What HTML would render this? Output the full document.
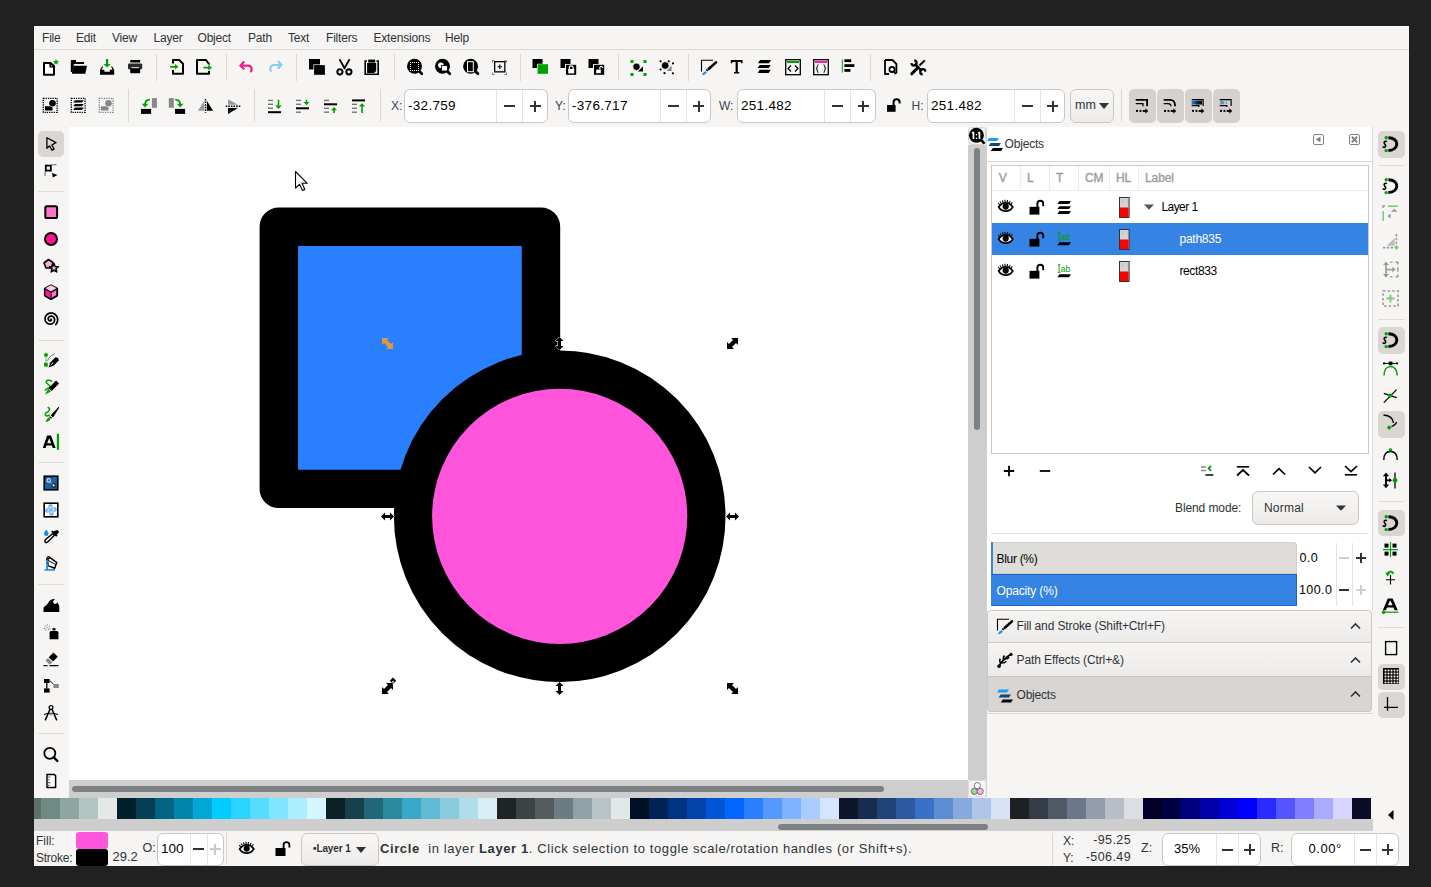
<!DOCTYPE html><html><head><meta charset="utf-8"><style>
*{box-sizing:border-box;margin:0;padding:0}
html,body{width:1431px;height:887px;overflow:hidden;background:#212121;font-family:"Liberation Sans",sans-serif;color:#2e3436}
.a{position:absolute}
.t{position:absolute;white-space:nowrap;line-height:1}
.sep{position:absolute;width:1px;background:#dad6d2}
.hsep{position:absolute;height:1px;background:#dad6d2}
svg{position:absolute;overflow:visible}
.spin{position:absolute;background:#fff;border:1px solid #cdc7c2;border-radius:6px}
.spin .s{position:absolute;top:0;bottom:0;width:1px;background:#e6e2de}
</style></head><body><div class="a" style="left:34px;top:26px;width:1375px;height:840px;background:#f6f5f4"></div>
<div class="a" style="left:34px;top:26px;width:1375px;height:1px;background:#fbfbfa"></div>
<div class="a" style="left:34px;top:49px;width:1375px;height:1px;background:#dcd8d4"></div>
<div class="t" style="left:42px;top:31.54px;font-size:12px;color:#2e3436;letter-spacing:-0.2px">File</div>
<div class="t" style="left:76px;top:31.54px;font-size:12px;color:#2e3436;letter-spacing:-0.2px">Edit</div>
<div class="t" style="left:112px;top:31.54px;font-size:12px;color:#2e3436;letter-spacing:-0.2px">View</div>
<div class="t" style="left:153.5px;top:31.54px;font-size:12px;color:#2e3436;letter-spacing:-0.2px">Layer</div>
<div class="t" style="left:197.5px;top:31.54px;font-size:12px;color:#2e3436;letter-spacing:-0.2px">Object</div>
<div class="t" style="left:248px;top:31.54px;font-size:12px;color:#2e3436;letter-spacing:-0.2px">Path</div>
<div class="t" style="left:288px;top:31.54px;font-size:12px;color:#2e3436;letter-spacing:-0.2px">Text</div>
<div class="t" style="left:326px;top:31.54px;font-size:12px;color:#2e3436;letter-spacing:-0.2px">Filters</div>
<div class="t" style="left:373.5px;top:31.54px;font-size:12px;color:#2e3436;letter-spacing:-0.2px">Extensions</div>
<div class="t" style="left:445px;top:31.54px;font-size:12px;color:#2e3436;letter-spacing:-0.2px">Help</div>
<div class="sep" style="left:156px;top:54px;height:27px"></div>
<div class="sep" style="left:226px;top:54px;height:27px"></div>
<div class="sep" style="left:296px;top:54px;height:27px"></div>
<div class="sep" style="left:394px;top:54px;height:27px"></div>
<div class="sep" style="left:520px;top:54px;height:27px"></div>
<div class="sep" style="left:618px;top:54px;height:27px"></div>
<div class="sep" style="left:688px;top:54px;height:27px"></div>
<div class="sep" style="left:870px;top:54px;height:27px"></div>
<div class="sep" style="left:128px;top:89px;height:33px"></div>
<div class="sep" style="left:254px;top:89px;height:33px"></div>
<div class="sep" style="left:380px;top:89px;height:33px"></div>
<div class="sep" style="left:1121px;top:89px;height:33px"></div>
<div class="t" style="left:391px;top:99.84px;font-size:12px;color:#3a4450;">X:</div>
<div class="spin" style="left:404px;top:89px;width:144px;height:34px"></div>
<div class="a" style="left:496px;top:90px;width:1px;height:32px;background:#e8e4e0"></div>
<div class="a" style="left:522px;top:90px;width:1px;height:32px;background:#e8e4e0"></div>
<div class="a" style="left:503.5px;top:105.0px;width:11px;height:2px;background:#2e3436"></div>
<div class="a" style="left:529.5px;top:105.0px;width:11px;height:2px;background:#2e3436"></div>
<div class="a" style="left:534.0px;top:100.5px;width:2px;height:11px;background:#2e3436"></div>
<div class="t" style="left:408px;top:99.07px;font-size:13.5px;color:#000;letter-spacing:0.3px">-32.759</div>
<div class="t" style="left:555px;top:99.84px;font-size:12px;color:#3a4450;">Y:</div>
<div class="spin" style="left:568px;top:89px;width:143px;height:34px"></div>
<div class="a" style="left:660px;top:90px;width:1px;height:32px;background:#e8e4e0"></div>
<div class="a" style="left:686px;top:90px;width:1px;height:32px;background:#e8e4e0"></div>
<div class="a" style="left:667.5px;top:105.0px;width:11px;height:2px;background:#2e3436"></div>
<div class="a" style="left:693.0px;top:105.0px;width:11px;height:2px;background:#2e3436"></div>
<div class="a" style="left:697.5px;top:100.5px;width:2px;height:11px;background:#2e3436"></div>
<div class="t" style="left:572px;top:99.07px;font-size:13.5px;color:#000;letter-spacing:0.3px">-376.717</div>
<div class="t" style="left:719px;top:99.84px;font-size:12px;color:#3a4450;">W:</div>
<div class="spin" style="left:737px;top:89px;width:139px;height:34px"></div>
<div class="a" style="left:824px;top:90px;width:1px;height:32px;background:#e8e4e0"></div>
<div class="a" style="left:850px;top:90px;width:1px;height:32px;background:#e8e4e0"></div>
<div class="a" style="left:831.5px;top:105.0px;width:11px;height:2px;background:#2e3436"></div>
<div class="a" style="left:857.5px;top:105.0px;width:11px;height:2px;background:#2e3436"></div>
<div class="a" style="left:862.0px;top:100.5px;width:2px;height:11px;background:#2e3436"></div>
<div class="t" style="left:741px;top:99.07px;font-size:13.5px;color:#000;letter-spacing:0.3px">251.482</div>
<div class="t" style="left:911.5px;top:99.84px;font-size:12px;color:#3a4450;">H:</div>
<div class="spin" style="left:927px;top:89px;width:138px;height:34px"></div>
<div class="a" style="left:1014px;top:90px;width:1px;height:32px;background:#e8e4e0"></div>
<div class="a" style="left:1040px;top:90px;width:1px;height:32px;background:#e8e4e0"></div>
<div class="a" style="left:1021.5px;top:105.0px;width:11px;height:2px;background:#2e3436"></div>
<div class="a" style="left:1047.0px;top:105.0px;width:11px;height:2px;background:#2e3436"></div>
<div class="a" style="left:1051.5px;top:100.5px;width:2px;height:11px;background:#2e3436"></div>
<div class="t" style="left:931px;top:99.07px;font-size:13.5px;color:#000;letter-spacing:0.3px">251.482</div>
<div class="a" style="left:1070px;top:89px;width:44px;height:34px;background:linear-gradient(#f8f7f6,#edebe9);border:1px solid #cdc7c2;border-radius:6px"></div>
<div class="t" style="left:1075px;top:99.42px;font-size:12.5px;color:#2e3436;">mm</div>
<svg style="left:1099px;top:103px" width="10" height="6" viewBox="0 0 10 6"><path d="M0 0H10L5 6Z" fill="#2e3436"/></svg>
<div class="a" style="left:1129px;top:89px;width:27px;height:34px;background:#d6d1cd;border-radius:5px"></div>
<div class="a" style="left:1157px;top:89px;width:27px;height:34px;background:#d6d1cd;border-radius:5px"></div>
<div class="a" style="left:1185px;top:89px;width:27px;height:34px;background:#d6d1cd;border-radius:5px"></div>
<div class="a" style="left:1213px;top:89px;width:27px;height:34px;background:#d6d1cd;border-radius:5px"></div>
<div class="a" style="left:69px;top:127px;width:899px;height:653px;background:#fff"></div>
<svg style="left:0px;top:0px" width="1431" height="887" viewBox="0 0 1431 887"><rect x="278.8" y="226.7" width="262.20000000000005" height="262.20000000000005" fill="#2a7fff" stroke="#000" stroke-width="38.4" stroke-linejoin="round"/><circle cx="559.7" cy="516.3" r="146.7" fill="#ff55dd" stroke="#000" stroke-width="38.20000000000002"/></svg>
<svg style="left:0px;top:0px" width="1431" height="887" viewBox="0 0 1431 887"><path transform="translate(727,338)" d="M4,0 H11 V7 L9,5 L5,9 L7,11 H0 V4 L2,6 L6,2 Z" fill="#000" stroke="#fff" stroke-width="1" paint-order="stroke"/><path transform="translate(382,683)" d="M4,0 H11 V7 L9,5 L5,9 L7,11 H0 V4 L2,6 L6,2 Z" fill="#000" stroke="#fff" stroke-width="1" paint-order="stroke"/><path transform="translate(393,683)" d="M0,-5.5 L3.2,-2.2 L0,1 L-3.2,-2.2 Z" fill="#000" stroke="#fff" stroke-width="1" paint-order="stroke"/><path transform="translate(393,683)" d="M-1.2,-1.2 L0.5,-2.5 L0.8,0.2 Z" fill="#fff"/><path transform="translate(727,683)" d="M7,0 H0 V7 L2,5 L6,9 L4,11 H11 V4 L9,6 L5,2 Z" fill="#000" stroke="#fff" stroke-width="1" paint-order="stroke"/><path transform="translate(382,338)" d="M7,0 H0 V7 L2,5 L6,9 L4,11 H11 V4 L9,6 L5,2 Z" fill="#e0963c"/><path transform="translate(381,512)" d="M0,4.5 L4,0.5 V3 H9 V0.5 L13,4.5 L9,8.5 V6 H4 V8.5 Z" fill="#000" stroke="#fff" stroke-width="1" paint-order="stroke"/><path transform="translate(726,512)" d="M0,4.5 L4,0.5 V3 H9 V0.5 L13,4.5 L9,8.5 V6 H4 V8.5 Z" fill="#000" stroke="#fff" stroke-width="1" paint-order="stroke"/><path transform="translate(555,337)" d="M4.5,0 L8.5,4 H6 V9 H8.5 L4.5,13 L0.5,9 H3 V4 H0.5 Z" fill="#000" stroke="#fff" stroke-width="1" paint-order="stroke"/><path transform="translate(555,682)" d="M4.5,0 L8.5,4 H6 V9 H8.5 L4.5,13 L0.5,9 H3 V4 H0.5 Z" fill="#000" stroke="#fff" stroke-width="1" paint-order="stroke"/><path transform="translate(295.5,171.5)" d="M0,0 V16.5 L4,12.8 L7,19 L9.3,18 L6.6,11.8 H11.8 Z" fill="#fff" stroke="#000" stroke-width="1.1" stroke-linejoin="round"/></svg>
<div class="a" style="left:968px;top:127px;width:18px;height:653px;background:#cecece"></div>
<div class="a" style="left:968px;top:127px;width:19px;height:18px;background:#f6f5f4"></div>
<div class="a" style="left:974px;top:148px;width:6px;height:282px;background:#7e8183;border-radius:3px"></div>
<div class="a" style="left:69px;top:780px;width:899px;height:18px;background:#cecece"></div>
<div class="a" style="left:72px;top:786px;width:812px;height:6px;background:#7e8183;border-radius:3px"></div>
<div class="a" style="left:968px;top:780px;width:19px;height:17px;background:#f6f5f4"></div>
<div class="a" style="left:987px;top:127px;width:385px;height:670px;background:#f6f5f4"></div>
<div class="a" style="left:986px;top:127px;width:1px;height:670px;background:#d5d0cc"></div>
<div class="a" style="left:987px;top:127px;width:385px;height:484px;background:#fff"></div>
<div class="a" style="left:988px;top:161px;width:384px;height:1px;background:#d8d4d0"></div>
<div class="a" style="left:991px;top:165px;width:378px;height:289px;background:#fff;border:1px solid #cdc7c2"></div>
<div class="a" style="left:992px;top:190px;width:376px;height:1px;background:#efedeb"></div>
<div class="a" style="left:1020px;top:166px;width:1px;height:24px;background:#efedeb"></div>
<div class="a" style="left:1049px;top:166px;width:1px;height:24px;background:#efedeb"></div>
<div class="a" style="left:1078px;top:166px;width:1px;height:24px;background:#efedeb"></div>
<div class="a" style="left:1109px;top:166px;width:1px;height:24px;background:#efedeb"></div>
<div class="a" style="left:1138px;top:166px;width:1px;height:24px;background:#efedeb"></div>
<div class="a" style="left:992px;top:223px;width:376px;height:32px;background:#3584e4"></div>
<div class="a" style="left:991px;top:533px;width:378px;height:1px;background:#e6e3e0"></div>
<div class="a" style="left:991px;top:542px;width:306px;height:32px;background:#deddda;border:1px solid #d2cdc8;border-left:none;border-radius:0 4px 0 0"></div>
<div class="a" style="left:991px;top:542px;width:2px;height:32px;background:#3584e4"></div>
<div class="a" style="left:991px;top:574px;width:306px;height:32px;background:#3584e4;border:1px solid #1f63c4;border-left:none"></div>
<div class="a" style="left:987px;top:610px;width:385px;height:33px;background:linear-gradient(#f6f5f4,#edebe9);border:1px solid #cdc7c2;border-radius:4px 4px 0 0"></div>
<div class="a" style="left:987px;top:643px;width:385px;height:34px;background:linear-gradient(#f6f5f4,#edebe9);border:1px solid #cdc7c2;border-top:none"></div>
<div class="a" style="left:987px;top:677px;width:385px;height:35px;background:#d9d5d2;border:1px solid #cdc7c2;border-top:none;border-radius:0 0 4px 4px"></div>
<div class="a" style="left:1372px;top:127px;width:37px;height:670px;background:#f6f5f4"></div>
<div class="a" style="left:34px;top:798px;width:7px;height:21px;background:#5a7069"></div>
<div class="a" style="left:41px;top:798px;width:19px;height:21px;background:#6f8a84"></div>
<div class="a" style="left:60px;top:798px;width:19px;height:21px;background:#8fa5a0"></div>
<div class="a" style="left:79px;top:798px;width:19px;height:21px;background:#b3c5c1"></div>
<div class="a" style="left:98px;top:798px;width:19px;height:21px;background:#e4e9e8"></div>
<div class="a" style="left:117px;top:798px;width:19px;height:21px;background:#02202a"></div>
<div class="a" style="left:136px;top:798px;width:19px;height:21px;background:#033e52"></div>
<div class="a" style="left:155px;top:798px;width:19px;height:21px;background:#026484"></div>
<div class="a" style="left:174px;top:798px;width:19px;height:21px;background:#0086ab"></div>
<div class="a" style="left:193px;top:798px;width:19px;height:21px;background:#00a6d4"></div>
<div class="a" style="left:212px;top:798px;width:19px;height:21px;background:#00cdff"></div>
<div class="a" style="left:231px;top:798px;width:19px;height:21px;background:#2ad4ff"></div>
<div class="a" style="left:250px;top:798px;width:19px;height:21px;background:#55ddff"></div>
<div class="a" style="left:269px;top:798px;width:19px;height:21px;background:#80e5ff"></div>
<div class="a" style="left:288px;top:798px;width:19px;height:21px;background:#aaeeff"></div>
<div class="a" style="left:307px;top:798px;width:19px;height:21px;background:#d5f6ff"></div>
<div class="a" style="left:326px;top:798px;width:19px;height:21px;background:#0b2127"></div>
<div class="a" style="left:345px;top:798px;width:19px;height:21px;background:#17404d"></div>
<div class="a" style="left:364px;top:798px;width:19px;height:21px;background:#216778"></div>
<div class="a" style="left:383px;top:798px;width:19px;height:21px;background:#2c8aa0"></div>
<div class="a" style="left:402px;top:798px;width:19px;height:21px;background:#37a8c8"></div>
<div class="a" style="left:421px;top:798px;width:19px;height:21px;background:#5fbcd3"></div>
<div class="a" style="left:440px;top:798px;width:19px;height:21px;background:#87cdde"></div>
<div class="a" style="left:459px;top:798px;width:19px;height:21px;background:#afdde9"></div>
<div class="a" style="left:478px;top:798px;width:19px;height:21px;background:#d7eef4"></div>
<div class="a" style="left:497px;top:798px;width:19px;height:21px;background:#1f2426"></div>
<div class="a" style="left:516px;top:798px;width:19px;height:21px;background:#3b4346"></div>
<div class="a" style="left:535px;top:798px;width:19px;height:21px;background:#535d5e"></div>
<div class="a" style="left:554px;top:798px;width:19px;height:21px;background:#6c7d81"></div>
<div class="a" style="left:573px;top:798px;width:19px;height:21px;background:#91a2a6"></div>
<div class="a" style="left:592px;top:798px;width:19px;height:21px;background:#b7c3c6"></div>
<div class="a" style="left:611px;top:798px;width:19px;height:21px;background:#e2e7e8"></div>
<div class="a" style="left:630px;top:798px;width:19px;height:21px;background:#001127"></div>
<div class="a" style="left:649px;top:798px;width:19px;height:21px;background:#002255"></div>
<div class="a" style="left:668px;top:798px;width:19px;height:21px;background:#003380"></div>
<div class="a" style="left:687px;top:798px;width:19px;height:21px;background:#0044aa"></div>
<div class="a" style="left:706px;top:798px;width:19px;height:21px;background:#0055d4"></div>
<div class="a" style="left:725px;top:798px;width:19px;height:21px;background:#0066ff"></div>
<div class="a" style="left:744px;top:798px;width:19px;height:21px;background:#2a7fff"></div>
<div class="a" style="left:763px;top:798px;width:19px;height:21px;background:#5599ff"></div>
<div class="a" style="left:782px;top:798px;width:19px;height:21px;background:#80b3ff"></div>
<div class="a" style="left:801px;top:798px;width:19px;height:21px;background:#aaccff"></div>
<div class="a" style="left:820px;top:798px;width:19px;height:21px;background:#d5e5ff"></div>
<div class="a" style="left:839px;top:798px;width:19px;height:21px;background:#0b1728"></div>
<div class="a" style="left:858px;top:798px;width:19px;height:21px;background:#162d50"></div>
<div class="a" style="left:877px;top:798px;width:19px;height:21px;background:#214478"></div>
<div class="a" style="left:896px;top:798px;width:19px;height:21px;background:#2c5aa0"></div>
<div class="a" style="left:915px;top:798px;width:19px;height:21px;background:#3771c8"></div>
<div class="a" style="left:934px;top:798px;width:19px;height:21px;background:#5f8dd3"></div>
<div class="a" style="left:953px;top:798px;width:19px;height:21px;background:#87aade"></div>
<div class="a" style="left:972px;top:798px;width:19px;height:21px;background:#afc6e9"></div>
<div class="a" style="left:991px;top:798px;width:19px;height:21px;background:#d7e3f4"></div>
<div class="a" style="left:1010px;top:798px;width:19px;height:21px;background:#1d2123"></div>
<div class="a" style="left:1029px;top:798px;width:19px;height:21px;background:#353c45"></div>
<div class="a" style="left:1048px;top:798px;width:19px;height:21px;background:#4f5965"></div>
<div class="a" style="left:1067px;top:798px;width:19px;height:21px;background:#6c788a"></div>
<div class="a" style="left:1086px;top:798px;width:19px;height:21px;background:#939dac"></div>
<div class="a" style="left:1105px;top:798px;width:19px;height:21px;background:#b7bec8"></div>
<div class="a" style="left:1124px;top:798px;width:19px;height:21px;background:#dbdee3"></div>
<div class="a" style="left:1143px;top:798px;width:19px;height:21px;background:#000028"></div>
<div class="a" style="left:1162px;top:798px;width:19px;height:21px;background:#000044"></div>
<div class="a" style="left:1181px;top:798px;width:19px;height:21px;background:#000080"></div>
<div class="a" style="left:1200px;top:798px;width:19px;height:21px;background:#0000aa"></div>
<div class="a" style="left:1219px;top:798px;width:19px;height:21px;background:#0000d4"></div>
<div class="a" style="left:1238px;top:798px;width:19px;height:21px;background:#0000ff"></div>
<div class="a" style="left:1257px;top:798px;width:19px;height:21px;background:#2a2aff"></div>
<div class="a" style="left:1276px;top:798px;width:19px;height:21px;background:#5555ff"></div>
<div class="a" style="left:1295px;top:798px;width:19px;height:21px;background:#8080ff"></div>
<div class="a" style="left:1314px;top:798px;width:19px;height:21px;background:#aaaaff"></div>
<div class="a" style="left:1333px;top:798px;width:19px;height:21px;background:#d5d5ff"></div>
<div class="a" style="left:1352px;top:798px;width:19px;height:21px;background:#0c0c28"></div>
<div class="a" style="left:34px;top:819px;width:1339px;height:12px;background:#cecece"></div>
<div class="a" style="left:778px;top:824px;width:210px;height:6px;background:#7e8183;border-radius:3px"></div>
<svg style="left:1388px;top:810px" width="6" height="10" viewBox="0 0 6 10"><path d="M5.5 0V10L0 5Z" fill="#000"/></svg>
<div class="t" style="left:36px;top:834.84px;font-size:12px;color:#2e3436;">Fill:</div>
<div class="t" style="left:36px;top:851.84px;font-size:12px;color:#2e3436;letter-spacing:-0.25px">Stroke:</div>
<div class="a" style="left:76px;top:832px;width:32px;height:17px;background:#ff55dd;border-radius:3px"></div>
<div class="a" style="left:76px;top:849px;width:32px;height:17px;background:#000;border-radius:3px"></div>
<div class="t" style="left:112.5px;top:850.0px;font-size:13px;color:#2e3436;">29.2</div>
<div class="t" style="left:142.5px;top:842.42px;font-size:12.5px;color:#2e3436;">O:</div>
<div class="spin" style="left:156.5px;top:832.5px;width:67px;height:33px"></div>
<div class="a" style="left:189.5px;top:833.5px;width:1px;height:31px;background:#e8e4e0"></div>
<div class="a" style="left:206.5px;top:833.5px;width:1px;height:31px;background:#e8e4e0"></div>
<div class="a" style="left:192.5px;top:848.0px;width:11px;height:2px;background:#2e3436"></div>
<div class="a" style="left:209.5px;top:848.0px;width:11px;height:2px;background:#c8c8c8"></div>
<div class="a" style="left:214.0px;top:843.5px;width:2px;height:11px;background:#c8c8c8"></div>
<div class="t" style="left:161px;top:841.57px;font-size:13.5px;color:#000;">100</div>
<div class="sep" style="left:226px;top:833px;height:32px"></div>
<div class="a" style="left:301px;top:833px;width:78px;height:33px;background:linear-gradient(#f8f7f6,#edebe9);border:1px solid #cdc7c2;border-radius:6px"></div>
<div class="t" style="left:313px;top:844.13px;font-size:10px;color:#2e3436;font-weight:bold;letter-spacing:-0.1px">&bull;Layer 1</div>
<svg style="left:356px;top:847px" width="10" height="6" viewBox="0 0 10 6"><path d="M0 0H10L5 6Z" fill="#2e3436"/></svg>
<div class="t" style="left:380px;top:842.0px;font-size:13px;color:#2e3436;letter-spacing:0.6px"><b>Circle</b>&nbsp; in layer <b>Layer 1</b>. Click selection to toggle scale/rotation handles (or Shift+s).</div>
<div class="sep" style="left:1052px;top:833px;height:32px"></div>
<div class="t" style="left:1063px;top:834.84px;font-size:12px;color:#2e3436;">X:</div>
<div class="t" style="left:1063px;top:851.84px;font-size:12px;color:#2e3436;">Y:</div>
<div class="t" style="left:1070px;top:834px;font-size:12.5px;color:#2e3436;width:61px;text-align:right;letter-spacing:0.4px">-95.25</div>
<div class="t" style="left:1070px;top:850.6px;font-size:12.5px;color:#2e3436;width:61px;text-align:right;letter-spacing:0.4px">-506.49</div>
<div class="t" style="left:1141px;top:842.42px;font-size:12.5px;color:#2e3436;">Z:</div>
<div class="spin" style="left:1162px;top:833px;width:99px;height:33px"></div>
<div class="a" style="left:1216px;top:834px;width:1px;height:31px;background:#e8e4e0"></div>
<div class="a" style="left:1238px;top:834px;width:1px;height:31px;background:#e8e4e0"></div>
<div class="a" style="left:1221.5px;top:848.5px;width:11px;height:2px;background:#2e3436"></div>
<div class="a" style="left:1244.0px;top:848.5px;width:11px;height:2px;background:#2e3436"></div>
<div class="a" style="left:1248.5px;top:844.0px;width:2px;height:11px;background:#2e3436"></div>
<div class="t" style="left:1174px;top:842.0px;font-size:13px;color:#000;">35%</div>
<div class="t" style="left:1271px;top:842.42px;font-size:12.5px;color:#2e3436;">R:</div>
<div class="spin" style="left:1291px;top:833px;width:108px;height:33px"></div>
<div class="a" style="left:1354px;top:834px;width:1px;height:31px;background:#e8e4e0"></div>
<div class="a" style="left:1376px;top:834px;width:1px;height:31px;background:#e8e4e0"></div>
<div class="a" style="left:1359.5px;top:848.5px;width:11px;height:2px;background:#2e3436"></div>
<div class="a" style="left:1382.0px;top:848.5px;width:11px;height:2px;background:#2e3436"></div>
<div class="a" style="left:1386.5px;top:844.0px;width:2px;height:11px;background:#2e3436"></div>
<div class="t" style="left:1308.4px;top:842.0px;font-size:13px;color:#000;letter-spacing:0.6px">0.00°</div>
<svg style="left:42px;top:59px" width="18" height="18" viewBox="0 0 18 18"><path d="M2,3.9 H8.6 L12,7.3 V15.8 H2 Z" fill="#fff" stroke="#000" stroke-width="2" stroke-linejoin="round"/><path d="M8.2,3.5 V7.8 H12.4" fill="none" stroke="#000" stroke-width="1.6"/><path d="M14,0 L14.9,2.1 L17.1,2.2 L15.4,3.6 L16,5.8 L14,4.6 L12,5.8 L12.6,3.6 L10.9,2.2 L13.1,2.1 Z" fill="#00a000"/></svg>
<svg style="left:70px;top:59px" width="18" height="18" viewBox="0 0 18 18"><path d="M0.8,1 H6 V3 H14 V5 H4 L2.5,13 H0.8 Z" fill="#000"/><path d="M3.5,6.8 H17 L15.3,14.8 H1.8 Z" fill="#000"/></svg>
<svg style="left:99px;top:59px" width="18" height="18" viewBox="0 0 18 18"><path d="M4,0 V0 M3,7.5 L1,11 V15.8 H15.2 V11 L13.2,7.5 H12 L13.6,10.7 H10.8 V12.8 H5.4 V10.7 H2.6 L4.2,7.5 Z" fill="#000"/><path d="M7,0 H9.2 V5 H11.8 L8.1,8.6 L4.4,5 H7 Z" fill="#00a000"/></svg>
<svg style="left:127px;top:59px" width="18" height="18" viewBox="0 0 18 18"><rect x="3.2" y="1" width="10" height="2.4" rx="0.5" fill="#000"/><rect x="1" y="4.6" width="14.2" height="5.6" rx="1" fill="#2a2a2a"/><rect x="3.2" y="8.8" width="10" height="5.4" rx="0.6" fill="#000"/><rect x="4.4" y="8.2" width="7.6" height="1" fill="#f6f5f4"/></svg>
<svg style="left:169px;top:59px" width="18" height="18" viewBox="0 0 18 18"><path d="M4,4.5 V1 H10.2 L14,4.8 V14.8 H4 V11" fill="none" stroke="#000" stroke-width="2" stroke-linejoin="round"/><path d="M1,6.9 H6 V5 L9.4,7.8 L6,10.6 V8.7 H1 Z" fill="#00a000"/></svg>
<svg style="left:196px;top:59px" width="18" height="18" viewBox="0 0 18 18"><path d="M13,5.5 V5 L10,1 H1 V14.8 H13 V12" fill="none" stroke="#000" stroke-width="2" stroke-linejoin="round"/><path d="M7.5,7.8 H12.3 V5.8 L16,8.7 L12.3,11.6 V9.6 H7.5 Z" fill="#00a000"/></svg>
<svg style="left:239px;top:59px" width="18" height="18" viewBox="0 0 18 18"><path d="M5.2,2.5 L1.5,6.6 L5.2,10.2" fill="none" stroke="#ee1d8a" stroke-width="2.2" stroke-linejoin="miter"/><path d="M2.2,6.6 H9 C13,6.6 13.6,11.5 11.2,12.8" fill="none" stroke="#ee1d8a" stroke-width="2.2"/></svg>
<svg style="left:268px;top:59px" width="18" height="18" viewBox="0 0 18 18"><path d="M9.8,2 L13.5,6 L9.8,9.6" fill="none" stroke="#8ccbf0" stroke-width="2.2"/><path d="M12.8,6 H6 C2,6 1.6,11 3.2,12.8" fill="none" stroke="#8ccbf0" stroke-width="2.2"/></svg>
<svg style="left:308px;top:59px" width="18" height="18" viewBox="0 0 18 18"><rect x="1" y="0" width="11" height="10.5" fill="#000"/><rect x="5.4" y="5.4" width="12" height="11" fill="#f6f5f4"/><rect x="6.1" y="6.1" width="10.8" height="9.7" fill="#000"/></svg>
<svg style="left:336px;top:59px" width="18" height="18" viewBox="0 0 18 18"><path d="M3.5,0.2 L9,10 M13.6,0.2 L8,10" stroke="#000" stroke-width="1.8" fill="none"/><circle cx="3.9" cy="12.8" r="2.6" fill="none" stroke="#000" stroke-width="2"/><circle cx="12.9" cy="12.8" r="2.6" fill="none" stroke="#000" stroke-width="2"/></svg>
<svg style="left:364px;top:59px" width="18" height="18" viewBox="0 0 18 18"><path d="M3,2 H1.2 V15.2 H14.2 V2 H12.4" fill="none" stroke="#000" stroke-width="1.6"/><rect x="4.2" y="0.6" width="7" height="3" fill="#000"/><path d="M3.1,4 H12.2 V12 L10,14 H3.1 Z" fill="#000"/></svg>
<svg style="left:406px;top:59px" width="18" height="18" viewBox="0 0 18 18"><circle cx="8.5" cy="7.3" r="7.5" fill="#000"/><path d="M13,12 L15.8,14.8" stroke="#000" stroke-width="2.8" stroke-linecap="round"/><rect x="4" y="3" width="1" height="1" fill="#fff"/><rect x="4" y="11" width="1" height="1" fill="#fff"/><rect x="6" y="3" width="1" height="1" fill="#fff"/><rect x="6" y="11" width="1" height="1" fill="#fff"/><rect x="8" y="3" width="1" height="1" fill="#fff"/><rect x="8" y="11" width="1" height="1" fill="#fff"/><rect x="10" y="3" width="1" height="1" fill="#fff"/><rect x="10" y="11" width="1" height="1" fill="#fff"/><rect x="12" y="3" width="1" height="1" fill="#fff"/><rect x="12" y="11" width="1" height="1" fill="#fff"/><rect x="4" y="5" width="1" height="1" fill="#fff"/><rect x="12" y="5" width="1" height="1" fill="#fff"/><rect x="4" y="7" width="1" height="1" fill="#fff"/><rect x="12" y="7" width="1" height="1" fill="#fff"/><rect x="4" y="9" width="1" height="1" fill="#fff"/><rect x="12" y="9" width="1" height="1" fill="#fff"/></svg>
<svg style="left:434px;top:59px" width="18" height="18" viewBox="0 0 18 18"><circle cx="8.5" cy="7.3" r="7.5" fill="#000"/><path d="M13,12 L15.8,14.8" stroke="#000" stroke-width="2.8" stroke-linecap="round"/><circle cx="6.9" cy="6.2" r="2.8" fill="#fff"/><rect x="7.4" y="6.6" width="6.2" height="5.4" fill="#fff" stroke="#000" stroke-width="0.9"/></svg>
<svg style="left:462px;top:59px" width="18" height="18" viewBox="0 0 18 18"><circle cx="8.6" cy="7.3" r="7.5" fill="#000"/><path d="M13.1,12 L15.9,14.8" stroke="#000" stroke-width="2.8" stroke-linecap="round"/><rect x="5.5" y="2.7" width="5.8" height="10" fill="#000" stroke="#fff" stroke-width="1"/></svg>
<svg style="left:491px;top:59px" width="18" height="18" viewBox="0 0 18 18"><path d="M1.6,3.5 V1.6 H3.5 M13.6,1.6 H15.5 V3.5 M15.5,13.6 V15.5 H13.6 M3.5,15.5 H1.6 V13.6" fill="none" stroke="#777" stroke-width="1"/><rect x="3.65" y="2.65" width="10.2" height="10.2" fill="none" stroke="#000" stroke-width="1.3"/><path d="M8.75,5.5 V10 M6.5,7.75 H11" stroke="#000" stroke-width="1.1"/></svg>
<svg style="left:532px;top:59px" width="18" height="18" viewBox="0 0 18 18"><rect x="0.5" y="0" width="10" height="9" fill="#000"/><rect x="5" y="4.8" width="11.4" height="10.4" fill="#f6f5f4"/><rect x="5.6" y="5.2" width="10.4" height="9.6" fill="#00a000"/></svg>
<svg style="left:560px;top:59px" width="18" height="18" viewBox="0 0 18 18"><rect x="0.5" y="0" width="10" height="9" fill="#000"/><rect x="5" y="5" width="11.6" height="11" fill="#f6f5f4"/><rect x="6" y="5.8" width="10.2" height="10" fill="#000"/><rect x="8.2" y="10" width="6" height="4.4" fill="#fff"/><path d="M9.3,10.3 V8.8 A1.9,1.9 0 0 1 13.1,8.8 V10.3" fill="none" stroke="#fff" stroke-width="1.2"/></svg>
<svg style="left:588px;top:59px" width="18" height="18" viewBox="0 0 18 18"><rect x="0.5" y="0" width="10" height="9" fill="#000"/><rect x="5" y="5" width="11.6" height="11" fill="#f6f5f4"/><rect x="6" y="5.8" width="10.2" height="10" fill="#000"/><rect x="8.2" y="10.6" width="4.6" height="3.6" fill="#fff"/><path d="M11.8,10.6 V8.4 A1.5,1.5 0 0 1 14.6,8.4 V9.1" fill="none" stroke="#fff" stroke-width="1.1"/></svg>
<svg style="left:630px;top:59.5px" width="18" height="18" viewBox="0 0 18 18"><rect x="0.5" y="0" width="3" height="3" fill="#00a000"/><rect x="13.5" y="0" width="3" height="3" fill="#00a000"/><rect x="0.5" y="13" width="3" height="3" fill="#00a000"/><rect x="13.5" y="13" width="3" height="3" fill="#00a000"/><path d="M8,11.5 L13,6.3 V11.5 Z" fill="#000"/><circle cx="6.5" cy="6.8" r="3.7" fill="#000" stroke="#f6f5f4" stroke-width="0.8"/></svg>
<svg style="left:659px;top:60px" width="18" height="18" viewBox="0 0 18 18"><circle cx="1.6" cy="1.3" r="1.1" fill="#000"/><circle cx="9.8" cy="1.3" r="1.1" fill="#000"/><circle cx="14" cy="3.4" r="1.1" fill="#000"/><circle cx="1.6" cy="9.5" r="1.1" fill="#000"/><circle cx="5.5" cy="13.2" r="1.1" fill="#000"/><circle cx="13.9" cy="13.3" r="1.1" fill="#000"/><path d="M7.6,11 L12.6,5.6 V11 Z" fill="#888"/><circle cx="6.2" cy="5.5" r="3.8" fill="#000" stroke="#f6f5f4" stroke-width="0.8"/></svg>
<svg style="left:700px;top:58.5px" width="18" height="18" viewBox="0 0 18 18"><path d="M1.5,12.5 V1.2 H13" fill="none" stroke="#000" stroke-width="1.1"/><path d="M16,3.4 L8.8,9.8" stroke="#000" stroke-width="2.6" stroke-linecap="round"/><path d="M7.6,10.6 L6.4,11.8" stroke="#000" stroke-width="2"/><path d="M2,16.2 C2.4,14.2 3.8,12.6 5.8,12.2 L6.8,13.4 C5.8,15.2 4,16.2 2,16.2 Z" fill="#1e90e8"/></svg>
<svg style="left:730px;top:59px" width="18" height="18" viewBox="0 0 18 18"><path d="M0.8,1 H12.6 V4.2 H11.3 L10.8,3 H7.8 V13 H9.3 V14.6 H4 V13 H5.6 V3 H2.6 L2.1,4.2 H0.8 Z" fill="#000"/></svg>
<svg style="left:757px;top:59px" width="18" height="18" viewBox="0 0 18 18"><path d="M3,1 H14 L12,4.2 H1 Z M2.7,5.9 H13.7 L11.7,9.1 H0.7 Z M2.7,10.8 H13.7 L11.7,14 H0.7 Z" fill="#000"/></svg>
<svg style="left:785px;top:59px" width="18" height="18" viewBox="0 0 18 18"><rect x="0.7" y="0.7" width="14.6" height="15" fill="none" stroke="#000" stroke-width="1.3"/><rect x="2" y="2" width="12" height="2" fill="#00a000"/><path d="M6,6.5 L3,9.5 L6,12.5 M10,6.5 L13,9.5 L10,12.5" fill="none" stroke="#000" stroke-width="1.2"/></svg>
<svg style="left:813px;top:59px" width="18" height="18" viewBox="0 0 18 18"><rect x="0.7" y="0.7" width="14.6" height="15" fill="none" stroke="#000" stroke-width="1.3"/><rect x="2" y="2" width="12" height="2" fill="#ff1b9b"/><path d="M5.5,5.5 C4,5.5 4.5,8.5 3.5,9.5 C4.5,10.5 4,13.5 5.5,13.5 M10.5,5.5 C12,5.5 11.5,8.5 12.5,9.5 C11.5,10.5 12,13.5 10.5,13.5" fill="none" stroke="#333" stroke-width="1.2"/></svg>
<svg style="left:841px;top:59px" width="18" height="18" viewBox="0 0 18 18"><rect x="0.8" y="0.5" width="1" height="13" fill="#00a000"/><rect x="3.4" y="0.3" width="6.8" height="2.8" fill="#000"/><rect x="3.4" y="5.2" width="10" height="2.8" fill="#000"/><rect x="3.4" y="10" width="6" height="2.8" fill="#000"/></svg>
<svg style="left:884px;top:59px" width="18" height="18" viewBox="0 0 18 18"><path d="M1,1 H8.5 L12.4,5 V14.5 M1,1 V15 H5" fill="none" stroke="#000" stroke-width="1.8" stroke-linejoin="round"/><circle cx="8" cy="10.4" r="2.6" fill="none" stroke="#000" stroke-width="1.8"/><path d="M9.5,12.2 L11.8,15" stroke="#000" stroke-width="1.8"/></svg>
<svg style="left:910px;top:59px" width="18" height="18" viewBox="0 0 18 18"><path d="M4.6,4.6 L11.8,11.8" stroke="#000" stroke-width="2.4"/><path d="M4.2,1.4 A2.6,2.6 0 1 1 1.4,4.2" fill="none" stroke="#000" stroke-width="2.2"/><path d="M12.6,15.4 A2.6,2.6 0 1 1 15.4,12.6" fill="none" stroke="#000" stroke-width="2.2"/><path d="M9.5,6.5 L14.8,1.4" stroke="#000" stroke-width="2"/><path d="M1.8,14.8 L7.2,9.4" stroke="#000" stroke-width="3" stroke-linecap="round"/></svg>
<svg style="left:42px;top:97px" width="18" height="18" viewBox="0 0 18 18"><rect x="1.3" y="1.3" width="13.8" height="14" fill="none" stroke="#000" stroke-width="1.3" stroke-dasharray="1.3,1"/><circle cx="10.5" cy="6.3" r="3.3" fill="#000"/><path d="M3,9.2 H8.2 A3.6,3.6 0 0 0 10.5,10.2 V13.6 H3 Z" fill="#000"/></svg>
<svg style="left:70px;top:97px" width="18" height="18" viewBox="0 0 18 18"><rect x="1.3" y="1.3" width="13.8" height="14" fill="none" stroke="#000" stroke-width="1.3" stroke-dasharray="1.3,1"/><path d="M5,3.2 H13.8 L12,5.6 H3.2 Z M5,6.9 H13.8 L12,9.3 H3.2 Z M5,10.6 H13.8 L12,13 H3.2 Z" fill="#000"/></svg>
<svg style="left:98px;top:97px" width="18" height="18" viewBox="0 0 18 18"><rect x="1.3" y="1.3" width="13.8" height="14" fill="none" stroke="#888" stroke-width="1.3" stroke-dasharray="1.3,1"/><circle cx="10.5" cy="6.3" r="3.3" fill="#888"/><path d="M3,9.2 H8.2 A3.6,3.6 0 0 0 10.5,10.2 V13.6 H3 Z" fill="#888"/></svg>
<svg style="left:140px;top:97px" width="18" height="18" viewBox="0 0 18 18"><rect x="1" y="11.9" width="10.1" height="5" fill="#000"/><rect x="11.9" y="1.1" width="5" height="9.7" fill="#888"/><path d="M10,2.6 C6.5,2.6 5,5 5,8" fill="none" stroke="#00a000" stroke-width="1.8"/><path d="M1.8,6.8 L5,10.6 L8.3,6.8 Z" fill="#00a000"/></svg>
<svg style="left:168px;top:97px" width="18" height="18" viewBox="0 0 18 18"><rect x="7" y="11.9" width="10.1" height="5" fill="#000"/><rect x="0.8" y="1.1" width="5" height="9.7" fill="#888"/><path d="M7.2,2.6 C10.7,2.6 12.2,5 12.2,8" fill="none" stroke="#00a000" stroke-width="1.8"/><path d="M9,6.8 L12.2,10.6 L15.5,6.8 Z" fill="#00a000"/></svg>
<svg style="left:197px;top:97px" width="18" height="18" viewBox="0 0 18 18"><path d="M7.2,3.8 V13.8 H1 Z" fill="#999"/><path d="M9.9,3.8 V13.8 H16 Z" fill="#000"/><path d="M8.5,1.9 V15.8" stroke="#000" stroke-width="1.4" stroke-dasharray="1.6,1"/></svg>
<svg style="left:225px;top:97px" width="18" height="18" viewBox="0 0 18 18"><path d="M3,2.3 V7.7 H13 Z" fill="#999"/><path d="M3,11.1 H13 L3,16.9 Z" fill="#000"/><path d="M0.7,9.3 H15.3" stroke="#000" stroke-width="1.4" stroke-dasharray="1.6,1"/></svg>
<svg style="left:268px;top:97.8px" width="18" height="18" viewBox="0 0 18 18"><rect x="0" y="1.7" width="5" height="1.4" fill="#777"/><rect x="0" y="5.6" width="5" height="1.4" fill="#777"/><rect x="0" y="9.600000000000001" width="5" height="1.4" fill="#777"/><rect x="0" y="13.2" width="13" height="2" fill="#000"/><path d="M10.5,1.8 V8.5" stroke="#00a000" stroke-width="1.6"/><path d="M7.2,7.5 H13.8 L10.5,11 Z" fill="#00a000"/></svg>
<svg style="left:296px;top:97.8px" width="18" height="18" viewBox="0 0 18 18"><rect x="0" y="1.7" width="5" height="1.4" fill="#777"/><rect x="0" y="5.6" width="5" height="1.4" fill="#777"/><rect x="0" y="9.3" width="13" height="2" fill="#000"/><rect x="0" y="13.5" width="5" height="1.4" fill="#777"/><path d="M10.5,1.8 V4.8" stroke="#00a000" stroke-width="1.6"/><path d="M7.5,4 H13.5 L10.5,7.2 Z" fill="#00a000"/></svg>
<svg style="left:324px;top:97.8px" width="18" height="18" viewBox="0 0 18 18"><rect x="0" y="1.7" width="5" height="1.4" fill="#777"/><rect x="0" y="5.3" width="13" height="2" fill="#000"/><rect x="0" y="9.600000000000001" width="5" height="1.4" fill="#777"/><rect x="0" y="13.5" width="5" height="1.4" fill="#777"/><path d="M10,12 V15" stroke="#00a000" stroke-width="1.6"/><path d="M7,12.2 H13 L10,9 Z" fill="#00a000"/></svg>
<svg style="left:352px;top:97.8px" width="18" height="18" viewBox="0 0 18 18"><rect x="0" y="1.4" width="13" height="2" fill="#000"/><rect x="0" y="5.6" width="5" height="1.4" fill="#777"/><rect x="0" y="9.600000000000001" width="5" height="1.4" fill="#777"/><rect x="0" y="13.5" width="5" height="1.4" fill="#777"/><path d="M10,8 V15" stroke="#00a000" stroke-width="1.6"/><path d="M6.8,8.6 H13.2 L10,5.2 Z" fill="#00a000"/></svg>
<svg style="left:886px;top:97px" width="18" height="18" viewBox="0 0 18 18"><rect x="1" y="8" width="8.6" height="6.8" fill="#000"/><path d="M7.6,8.5 V5.2 A3,3 0 0 1 13.6,5.2 V6.5" fill="none" stroke="#000" stroke-width="2"/></svg>
<div class="a" style="left:38px;top:131px;width:26px;height:26px;background:#dad6d2;border-radius:5px"></div>
<div class="a" style="left:38px;top:191px;width:26px;height:1px;background:#e0dcd8"></div>
<div class="a" style="left:38px;top:340px;width:26px;height:1px;background:#e0dcd8"></div>
<div class="a" style="left:38px;top:462px;width:26px;height:1px;background:#e0dcd8"></div>
<div class="a" style="left:38px;top:584px;width:26px;height:1px;background:#e0dcd8"></div>
<div class="a" style="left:38px;top:733px;width:26px;height:1px;background:#e0dcd8"></div>
<svg style="left:43px;top:136px" width="18" height="18" viewBox="0 0 18 18"><path d="M3.9,1.7 V12.3 L6.6,9.9 L9,14.2 L11.1,13.1 L8.8,9 L13,6.6 Z" fill="none" stroke="#000" stroke-width="1.3" stroke-linejoin="round"/></svg>
<svg style="left:43px;top:164px" width="18" height="18" viewBox="0 0 18 18"><rect x="2.8" y="1.6" width="5" height="5" fill="none" stroke="#000" stroke-width="1.8"/><path d="M8,1.4 C9.5,0.8 11,0.6 13.5,0.7 M2.5,7 C2,8.5 2,10 2,12" fill="none" stroke="#000" stroke-width="0.6"/><path d="M9,9 L14.5,11 L9.8,13.6 Z" fill="#000"/></svg>
<svg style="left:43px;top:204px" width="18" height="18" viewBox="0 0 18 18"><rect x="2.3" y="2.3" width="11.8" height="11.8" rx="1.6" fill="#ff74c8" stroke="#000" stroke-width="2"/></svg>
<svg style="left:43px;top:231px" width="18" height="18" viewBox="0 0 18 18"><circle cx="8" cy="8" r="6" fill="#ff1493" stroke="#000" stroke-width="2"/></svg>
<svg style="left:43px;top:258px" width="18" height="18" viewBox="0 0 18 18"><path d="M1,5 L5.5,1.5 L10,4.5 L8.5,10 L3,10 Z" fill="#ffa8dc" stroke="#000" stroke-width="1.6" stroke-linejoin="round"/><path d="M11,5.5 L12.2,8.6 L15.4,8.7 L12.9,10.8 L13.8,14 L11,12.1 L8.2,14 L9.1,10.8 L6.6,8.7 L9.8,8.6 Z" fill="#ffb3e0" stroke="#000" stroke-width="1.5" stroke-linejoin="round"/></svg>
<svg style="left:43px;top:284px" width="18" height="18" viewBox="0 0 18 18"><path d="M8,1.2 L14.2,4.6 V11.6 L8,15.2 L1.8,11.6 V4.6 Z" fill="#ff74c8" stroke="#000" stroke-width="1.8" stroke-linejoin="round"/><path d="M1.8,4.6 L8,8.2 L14.2,4.6" fill="#ffc8ea" stroke="#000" stroke-width="1.2"/><path d="M8,1.2 L14.2,4.6 L8,8.2 L1.8,4.6 Z" fill="#ffc8ea"/><path d="M8,8.2 V15 M1.8,4.6 L8,8.2 L14.2,4.6" fill="none" stroke="#000" stroke-width="1.2"/><path d="M2.6,5.8 L7.3,8.6 V13.8 L2.6,11.2 Z" fill="#ff1493"/></svg>
<svg style="left:43px;top:311px" width="18" height="18" viewBox="0 0 18 18"><path d="M7.95,8.20 L8.03,8.22 L8.11,8.27 L8.18,8.33 L8.24,8.41 L8.30,8.50 L8.33,8.61 L8.35,8.72 L8.35,8.84 L8.34,8.97 L8.30,9.10 L8.24,9.23 L8.16,9.35 L8.07,9.47 L7.95,9.58 L7.81,9.67 L7.66,9.75 L7.49,9.81 L7.30,9.85 L7.11,9.87 L6.91,9.86 L6.70,9.83 L6.50,9.77 L6.30,9.68 L6.10,9.56 L5.92,9.42 L5.75,9.25 L5.59,9.05 L5.46,8.83 L5.35,8.60 L5.27,8.34 L5.22,8.07 L5.21,7.79 L5.22,7.50 L5.27,7.21 L5.36,6.92 L5.48,6.64 L5.64,6.37 L5.84,6.11 L6.06,5.88 L6.32,5.67 L6.61,5.48 L6.92,5.33 L7.26,5.21 L7.61,5.14 L7.97,5.10 L8.35,5.10 L8.72,5.15 L9.10,5.25 L9.47,5.39 L9.82,5.58 L10.16,5.81 L10.47,6.08 L10.75,6.39 L11.00,6.73 L11.21,7.11 L11.38,7.52 L11.50,7.94 L11.58,8.39 L11.60,8.85 L11.56,9.31 L11.48,9.78 L11.34,10.23 L11.14,10.67 L10.89,11.10 L10.59,11.49 L10.24,11.86 L9.85,12.18 L9.42,12.47 L8.95,12.70 L8.45,12.88 L7.93,13.00 L7.40,13.07 L6.85,13.07 L6.30,13.01 L5.75,12.88 L5.22,12.69 L4.70,12.44 L4.21,12.12 L3.76,11.75 L3.35,11.33 L2.98,10.85 L2.67,10.33 L2.42,9.78 L2.23,9.19 L2.11,8.58 L2.06,7.95 L2.08,7.31 L2.17,6.68 L2.34,6.05 L2.58,5.44 L2.90,4.86 L3.28,4.31 L3.72,3.81 L4.22,3.35 L4.78,2.95 L5.39,2.61 L6.03,2.35 L6.71,2.15 L7.41,2.04 L8.13,2.00 L8.85,2.05 L9.57,2.18 L10.27,2.39 L10.95,2.69 L11.60,3.06 L12.20,3.51 L12.76,4.02 L13.26,4.61 L13.69,5.25 L14.04,5.94 L14.32,6.67 L14.52,7.44 L14.62,8.23 L14.64,9.03 L14.56,9.84 L14.40,10.63 L14.14,11.41 L13.79,12.16 L13.35,12.87 L12.83,13.53" fill="none" stroke="#000" stroke-width="1.7" stroke-linecap="round"/></svg>
<svg style="left:43px;top:352px" width="18" height="18" viewBox="0 0 18 18"><circle cx="3" cy="3" r="2" fill="#00a000"/><rect x="1" y="10.8" width="3.8" height="3.8" fill="#00a000"/><path d="M3,4 V11" stroke="#5cbf5c" stroke-width="1"/><path d="M4.5,9 C5.5,5.5 8,3.5 11.8,1.8" fill="none" stroke="#222" stroke-width="0.6"/><path d="M15.2,6 L12.5,5.2 L7.2,10.4 L5.6,15.4 L10.6,13.8 L15.8,8.5 Z" fill="#000"/><path d="M7.6,13.2 L10,11 M10.2,10.2 L9.6,10.8" stroke="#fff" stroke-width="0.8"/></svg>
<svg style="left:43px;top:379px" width="18" height="18" viewBox="0 0 18 18"><path d="M8.4,2.2 C6.5,0.6 3,1 3.3,3.4 C3.6,5.6 7.4,5.2 7,7.6 C6.6,9.8 3,9.2 2.4,11" fill="none" stroke="#00a000" stroke-width="1.6" stroke-linecap="round"/><path d="M13,1.6 L16,4.6 L8.6,12 L5.6,9 Z" fill="#000"/><path d="M5.2,9.6 L8,12.4 L2,15.8 Z" fill="#00a000"/></svg>
<svg style="left:43px;top:406px" width="18" height="18" viewBox="0 0 18 18"><path d="M5.2,1.5 C7.2,2.5 7,4.6 5,5.6 C3,6.6 1.8,7.4 2.4,9 C3,10.4 5.2,10 6.2,9.2" fill="none" stroke="#00a000" stroke-width="1.6" stroke-linecap="round"/><path d="M15.6,1.6 L8.4,9.4 L9.8,10.6 Z" fill="#000" stroke="#000" stroke-width="1.1" stroke-linejoin="round"/><path d="M7,10.2 L9,11.8 L8.2,12.8 L6,11.2 Z" fill="#000"/><path d="M5.6,11.6 L7.6,13.2 C6.2,15.2 4.4,15.8 2.6,16 C3.2,14.4 3.8,12.6 5.6,11.6 Z" fill="#00a000"/></svg>
<svg style="left:43px;top:433px" width="18" height="18" viewBox="0 0 18 18"><path d="M4,2.5 H8 L12.6,15 H9.7 L8.9,12.6 H3.4 L2.6,15 H-0.2 Z M4.2,10.2 H8.1 L6.2,5 Z" fill="#000"/><rect x="13.8" y="0.8" width="2.3" height="16" fill="#00a000"/></svg>
<svg style="left:43px;top:475px" width="18" height="18" viewBox="0 0 18 18"><defs><linearGradient id="gg" x1="0" y1="0" x2="1" y2="1"><stop offset="0" stop-color="#0f3f7a"/><stop offset="0.45" stop-color="#1a66b0"/><stop offset="1" stop-color="#0b4a8c"/></linearGradient></defs><rect x="1.2" y="1.2" width="13.6" height="13.6" fill="url(#gg)" stroke="#000" stroke-width="1.6"/><circle cx="5.6" cy="5.4" r="1.7" fill="none" stroke="#ddd" stroke-width="1.2"/><circle cx="10.6" cy="10.4" r="1.7" fill="#fff" stroke="#222" stroke-width="1.2"/><path d="M6.8,6.6 L9.4,9.2" stroke="#bbb" stroke-width="0.8"/></svg>
<svg style="left:43px;top:502px" width="18" height="18" viewBox="0 0 18 18"><defs><radialGradient id="mg" cx="0.5" cy="0.5" r="0.6"><stop offset="0" stop-color="#fff"/><stop offset="1" stop-color="#3d9df0"/></radialGradient></defs><rect x="1.2" y="1.2" width="13.6" height="13.6" fill="#fff" stroke="#000" stroke-width="1.6"/><path d="M8,8 C6,6 4,3.5 7.5,2.4 C10,3 10,5.5 8,8 Z M8,8 C10,6 12.5,4 13.6,7.5 C13,10 10.5,10 8,8 Z M8,8 C10,10 12,12.5 8.5,13.6 C6,13 6,10.5 8,8 Z M8,8 C6,10 3.5,12 2.4,8.5 C3,6 5.5,6 8,8 Z" fill="url(#mg)" stroke="#2a8ae0" stroke-width="0.5"/></svg>
<svg style="left:43px;top:529px" width="18" height="18" viewBox="0 0 18 18"><path d="M3.3,0.4 C2.2,2.2 1,3.3 1,4.7 A2.3,2.3 0 0 0 5.6,4.7 C5.6,3.3 4.4,2.2 3.3,0.4 Z" fill="#1a8ae0"/><path d="M13,1.4 A1.9,1.9 0 0 1 15.6,4 L13.8,5.8 L14.5,6.5 L13.2,7.8 L8.2,2.8 L9.5,1.5 L10.2,2.2 Z" fill="#000"/><path d="M9.7,4.6 L11.4,6.3 L5,12.8 C4.2,13.6 2.8,13.8 2.2,13.2 C1.6,12.6 1.8,11.2 2.6,10.4 Z" fill="#fff" stroke="#000" stroke-width="1.4"/></svg>
<svg style="left:43px;top:555px" width="18" height="18" viewBox="0 0 18 18"><path d="M4.6,4.8 L6.6,2.4 L13.8,7.6 L11.6,13.2 L5,10.6 Z" fill="#fff" stroke="#000" stroke-width="1.5" stroke-linejoin="round"/><path d="M4.8,5.2 L12.6,9.6" stroke="#000" stroke-width="1"/><path d="M4.6,6.4 C2.8,4.6 3.8,1.6 6.4,1.4" fill="none" stroke="#000" stroke-width="1.2"/><path d="M4.8,5 C3.6,7 3.6,9.2 4.6,10.4 C3.6,11.6 3.8,13 4.6,14.2" fill="none" stroke="#1a8ae0" stroke-width="1.6"/><path d="M1.6,14.9 H12" stroke="#1a8ae0" stroke-width="1.6"/></svg>
<svg style="left:43px;top:598px" width="18" height="18" viewBox="0 0 18 18"><path d="M0.5,14 V9.5 C2.5,8 4,6.5 5.5,4.5 C7.5,1.5 9.8,0.8 12,1.2 C10.5,2 9.5,3.5 10.5,5 C11.5,6.5 13.5,6 14.2,4.5 C15.5,5.8 16.3,7.5 16.3,9.5 V14 Z" fill="#000"/></svg>
<svg style="left:43px;top:624px" width="18" height="18" viewBox="0 0 18 18"><path d="M9.5,4.2 H12.5 V6.4 H9.5 Z" fill="#000"/><path d="M8,7 H14 C14.8,7 15.4,7.8 15.4,8.6 V15.2 H6.6 V8.6 C6.6,7.8 7.2,7 8,7 Z" fill="#000"/><g fill="#888"><circle cx="2" cy="2" r="0.7"/><circle cx="4.2" cy="1" r="0.7"/><circle cx="1.5" cy="4.4" r="0.7"/><circle cx="4" cy="3.5" r="0.7"/><circle cx="6.2" cy="2.6" r="0.7"/><circle cx="3" cy="6" r="0.7"/><circle cx="5.5" cy="5.2" r="0.7"/><circle cx="7.2" cy="4.8" r="0.7"/></g></svg>
<svg style="left:43px;top:651px" width="18" height="18" viewBox="0 0 18 18"><path d="M10.5,1.5 L14.8,5.8 L10,10.6 L5.7,6.3 Z" fill="#000"/><path d="M5,7 L9.3,11.3 L6.8,13.8 L2.5,9.5 Z" fill="#888"/><path d="M0.5,14.6 H4.5 M6.5,14.6 H15.5" stroke="#000" stroke-width="1.2"/></svg>
<svg style="left:43px;top:678px" width="18" height="18" viewBox="0 0 18 18"><rect x="1" y="1" width="5.6" height="4" fill="#000"/><rect x="1" y="10.4" width="5.6" height="4.2" fill="#000"/><rect x="10.4" y="6" width="5.4" height="4" fill="#888"/><path d="M3.8,5 V10.4" stroke="#000" stroke-width="1.3"/><path d="M7,2.8 L10.4,6" stroke="#000" stroke-width="0.9"/></svg>
<svg style="left:43px;top:705px" width="18" height="18" viewBox="0 0 18 18"><circle cx="8" cy="2.6" r="1.9" fill="none" stroke="#000" stroke-width="1.3"/><path d="M7,4.2 L2.2,15.4 M9,4.2 L13.8,15.4" stroke="#000" stroke-width="1.5"/><path d="M1,9.6 C5.5,7.8 10.5,7.8 15,9.6" fill="none" stroke="#000" stroke-width="1.1"/><circle cx="8" cy="9.3" r="1.2" fill="#888"/></svg>
<svg style="left:43px;top:746px" width="18" height="18" viewBox="0 0 18 18"><circle cx="6.8" cy="7.3" r="5.5" fill="none" stroke="#000" stroke-width="1.8"/><path d="M10.8,11.4 L14.4,15" stroke="#000" stroke-width="2.4" stroke-linecap="round"/></svg>
<svg style="left:43px;top:773px" width="18" height="18" viewBox="0 0 18 18"><path d="M4,1.6 H11.5 L12.6,2.7 V14.6 H4 Z" fill="#fff" stroke="#000" stroke-width="1.5" stroke-linejoin="round"/><path d="M4.5,4 H7.5 M4.5,6.8 H6.5 M4.5,9.6 H7.5 M4.5,12.4 H6.5" stroke="#666" stroke-width="1.2"/></svg>
<svg style="left:986px;top:136px" width="20" height="18" viewBox="0 0 20 18"><path d="M3,2 H13 L11,5 H1 Z" fill="#1e9bf0"/><path d="M4.6,7 H15 L13,10 H2.6 Z" fill="#0b4a72"/><path d="M6.8,11.9 H17 L15,15 H4.8 Z" fill="#000"/></svg>
<div class="t" style="left:1004.6px;top:137.84px;font-size:12px;color:#2e3436;letter-spacing:-0.2px">Objects</div>
<svg style="left:1313px;top:134px" width="12" height="12" viewBox="0 0 12 12"><rect x="0.5" y="0.5" width="10" height="10" rx="1.5" fill="none" stroke="#7f8387" stroke-width="1"/><path d="M7.5,2.6 V8.4 L2.8,5.5 Z" fill="#7f8387"/></svg>
<svg style="left:1349px;top:134px" width="12" height="12" viewBox="0 0 12 12"><rect x="0.5" y="0.5" width="10" height="10" rx="1.5" fill="none" stroke="#7f8387" stroke-width="1"/><path d="M2.8,2.8 L8.2,8.2 M8.2,2.8 L2.8,8.2" stroke="#7f8387" stroke-width="2"/></svg>
<div class="t" style="left:998.8px;top:172.34px;font-size:12px;color:#9c9b9a;-webkit-text-stroke:0.35px #9c9b9a;letter-spacing:-0.1px">V</div>
<div class="t" style="left:1027px;top:172.34px;font-size:12px;color:#9c9b9a;-webkit-text-stroke:0.35px #9c9b9a;letter-spacing:-0.1px">L</div>
<div class="t" style="left:1056px;top:172.34px;font-size:12px;color:#9c9b9a;-webkit-text-stroke:0.35px #9c9b9a;letter-spacing:-0.1px">T</div>
<div class="t" style="left:1085px;top:172.34px;font-size:12px;color:#9c9b9a;-webkit-text-stroke:0.35px #9c9b9a;letter-spacing:-0.1px">CM</div>
<div class="t" style="left:1116px;top:172.34px;font-size:12px;color:#9c9b9a;-webkit-text-stroke:0.35px #9c9b9a;letter-spacing:-0.1px">HL</div>
<div class="t" style="left:1145px;top:172.34px;font-size:12px;color:#9c9b9a;-webkit-text-stroke:0.35px #9c9b9a;letter-spacing:-0.1px">Label</div>
<svg style="left:997px;top:195px" width="18" height="18" viewBox="0 0 18 18"><path d="M1.6,12 C5.2,6.4 12.2,6.4 15.8,12 C12.2,17.6 5.2,17.6 1.6,12 Z" fill="#fff" stroke="#000" stroke-width="1.7"/><circle cx="8.7" cy="11.6" r="3.1" fill="#000"/><path d="M2.6,9.6 L1.2,8.2 M4.2,8.3 L3,6.5 M6.1,7.5 L5.4,5.4 M8.1,7.2 L7.9,4.8 M10.1,7.3 L10.5,5 M12.1,7.9 L13.1,5.9 M14,9 L15.4,7.4" stroke="#000" stroke-width="1.1"/></svg>
<svg style="left:1028.5px;top:200px" width="16" height="16" viewBox="0 0 16 16"><rect x="0.5" y="6.8" width="9.9" height="7.8" fill="#000"/><path d="M8.4,7 V3.6 A2.9,2.9 0 0 1 14.2,3.6 V6.2" fill="none" stroke="#000" stroke-width="1.9"/></svg>
<svg style="left:1057px;top:200px" width="16" height="16" viewBox="0 0 16 16"><path d="M2.4,1.1 H14 L12,4 H0.4 Z M2.4,6.2 H14 L12,9 H0.4 Z M2.4,11 H14 L12,14 H0.4 Z" fill="#000"/></svg>
<svg style="left:1118.7px;top:196.5px" width="12" height="22" viewBox="0 0 12 22"><rect x="0.5" y="0.5" width="9.6" height="20" fill="#d4d4d4" stroke="#333" stroke-width="1"/><path d="M2,2 L5,6 M6,2 L8.5,5" stroke="#bbb" stroke-width="1"/><rect x="1" y="10.5" width="8.6" height="9.5" fill="#f00"/></svg>
<svg style="left:1144px;top:204px" width="11" height="7" viewBox="0 0 11 7"><path d="M0,0.5 H10 L5,5.8 Z" fill="#555"/></svg>
<div class="t" style="left:1161.4px;top:201.34px;font-size:12px;color:#000;letter-spacing:-0.55px">Layer 1</div>
<svg style="left:997px;top:227px" width="18" height="18" viewBox="0 0 18 18"><path d="M1.6,12 C5.2,6.4 12.2,6.4 15.8,12 C12.2,17.6 5.2,17.6 1.6,12 Z" fill="#fff" stroke="#000" stroke-width="1.7"/><circle cx="8.7" cy="11.6" r="3.1" fill="#000"/><path d="M2.6,9.6 L1.2,8.2 M4.2,8.3 L3,6.5 M6.1,7.5 L5.4,5.4 M8.1,7.2 L7.9,4.8 M10.1,7.3 L10.5,5 M12.1,7.9 L13.1,5.9 M14,9 L15.4,7.4" stroke="#000" stroke-width="1.1"/></svg>
<svg style="left:1028.5px;top:232px" width="16" height="16" viewBox="0 0 16 16"><rect x="0.5" y="6.8" width="9.9" height="7.8" fill="#000"/><path d="M8.4,7 V3.6 A2.9,2.9 0 0 1 14.2,3.6 V6.2" fill="none" stroke="#000" stroke-width="1.9"/></svg>
<svg style="left:1057px;top:231.5px" width="16" height="16" viewBox="0 0 16 16"><text x="3.4" y="8.4" font-family="Liberation Mono" font-size="8.6" fill="#00a000" letter-spacing="-0.3">ab</text><path d="M0.8,0.8 H3.4 M2.1,0.8 V8.4 M0.8,8.4 H3.4" stroke="#00a000" stroke-width="0.9"/><path d="M2.4,10.2 H14 L12,13.2 H0.4 Z" fill="#000"/></svg>
<svg style="left:1118.7px;top:228.5px" width="12" height="22" viewBox="0 0 12 22"><rect x="0.5" y="0.5" width="9.6" height="20" fill="#d4d4d4" stroke="#333" stroke-width="1"/><path d="M2,2 L5,6 M6,2 L8.5,5" stroke="#bbb" stroke-width="1"/><rect x="1" y="10.5" width="8.6" height="9.5" fill="#f00"/></svg>
<div class="t" style="left:1179.5px;top:233.24px;font-size:12px;color:#fff;letter-spacing:-0.25px">path835</div>
<svg style="left:997px;top:259px" width="18" height="18" viewBox="0 0 18 18"><path d="M1.6,12 C5.2,6.4 12.2,6.4 15.8,12 C12.2,17.6 5.2,17.6 1.6,12 Z" fill="#fff" stroke="#000" stroke-width="1.7"/><circle cx="8.7" cy="11.6" r="3.1" fill="#000"/><path d="M2.6,9.6 L1.2,8.2 M4.2,8.3 L3,6.5 M6.1,7.5 L5.4,5.4 M8.1,7.2 L7.9,4.8 M10.1,7.3 L10.5,5 M12.1,7.9 L13.1,5.9 M14,9 L15.4,7.4" stroke="#000" stroke-width="1.1"/></svg>
<svg style="left:1028.5px;top:264px" width="16" height="16" viewBox="0 0 16 16"><rect x="0.5" y="6.8" width="9.9" height="7.8" fill="#000"/><path d="M8.4,7 V3.6 A2.9,2.9 0 0 1 14.2,3.6 V6.2" fill="none" stroke="#000" stroke-width="1.9"/></svg>
<svg style="left:1057px;top:263.5px" width="16" height="16" viewBox="0 0 16 16"><text x="3.4" y="8.4" font-family="Liberation Mono" font-size="8.6" fill="#00a000" letter-spacing="-0.3">ab</text><path d="M0.8,0.8 H3.4 M2.1,0.8 V8.4 M0.8,8.4 H3.4" stroke="#00a000" stroke-width="0.9"/><path d="M2.4,10.2 H14 L12,13.2 H0.4 Z" fill="#000"/></svg>
<svg style="left:1118.7px;top:260.5px" width="12" height="22" viewBox="0 0 12 22"><rect x="0.5" y="0.5" width="9.6" height="20" fill="#d4d4d4" stroke="#333" stroke-width="1"/><path d="M2,2 L5,6 M6,2 L8.5,5" stroke="#bbb" stroke-width="1"/><rect x="1" y="10.5" width="8.6" height="9.5" fill="#f00"/></svg>
<div class="t" style="left:1179.5px;top:265.24px;font-size:12px;color:#000;letter-spacing:-0.4px">rect833</div>
<svg style="left:1003px;top:465px" width="13" height="13" viewBox="0 0 13 13"><path d="M6,0.8 V11.2 M0.8,6 H11.2" stroke="#000" stroke-width="1.8"/></svg>
<svg style="left:1039px;top:465px" width="13" height="13" viewBox="0 0 13 13"><path d="M0.8,6 H11.2" stroke="#000" stroke-width="1.8"/></svg>
<svg style="left:1200px;top:465px" width="15" height="12" viewBox="0 0 15 12"><path d="M1,2 H6 M1,5.6 H6" stroke="#888" stroke-width="1.5"/><path d="M11,0.8 L8.6,3.3 L11,5.8" fill="none" stroke="#00a000" stroke-width="1.8"/><path d="M5.5,10 H13.3" stroke="#000" stroke-width="1.5"/></svg>
<svg style="left:1236px;top:465px" width="14" height="12" viewBox="0 0 14 12"><path d="M0.8,1.8 H13" stroke="#000" stroke-width="1.6"/><path d="M1,10.5 L7,5 L13,10.5" fill="none" stroke="#000" stroke-width="1.7"/></svg>
<svg style="left:1272px;top:466px" width="14" height="11" viewBox="0 0 14 11"><path d="M1,8.5 L7,2.6 L13,8.5" fill="none" stroke="#000" stroke-width="1.7"/></svg>
<svg style="left:1308px;top:465px" width="14" height="11" viewBox="0 0 14 11"><path d="M1,2 L7,7.8 L13,2" fill="none" stroke="#000" stroke-width="1.7"/></svg>
<svg style="left:1344px;top:465px" width="14" height="12" viewBox="0 0 14 12"><path d="M1,1 L7,6.6 L13,1" fill="none" stroke="#000" stroke-width="1.7"/><path d="M0.8,9.8 H13" stroke="#000" stroke-width="1.6"/></svg>
<div class="t" style="left:1175px;top:501.64px;font-size:12px;color:#2e3436;letter-spacing:-0.1px">Blend mode:</div>
<div class="a" style="left:1252px;top:491px;width:107px;height:34px;background:linear-gradient(#f8f7f6,#edebe9);border:1px solid #cdc7c2;border-radius:6px"></div>
<div class="t" style="left:1264px;top:501.84px;font-size:12px;color:#2e3436;letter-spacing:0.2px">Normal</div>
<svg style="left:1336px;top:505px" width="11" height="7" viewBox="0 0 11 7"><path d="M0,0.5 H10 L5,5.8 Z" fill="#2e3436"/></svg>
<div class="t" style="left:996.5px;top:553.24px;font-size:12px;color:#000;letter-spacing:-0.3px">Blur (%)</div>
<div class="t" style="left:996.5px;top:585.24px;font-size:12px;color:#fff;letter-spacing:-0.15px">Opacity (%)</div>
<div class="t" style="left:1299.5px;top:552.42px;font-size:12.5px;color:#000;letter-spacing:0.4px">0.0</div>
<div class="t" style="left:1299px;top:584.42px;font-size:12.5px;color:#000;letter-spacing:0.4px">100.0</div>
<div class="a" style="left:1336px;top:543px;width:1px;height:63px;background:#e6e2de"></div>
<div class="a" style="left:1352px;top:543px;width:1px;height:63px;background:#e6e2de"></div>
<div class="a" style="left:1339px;top:557px;width:10px;height:1.6px;background:#d0d0d0"></div>
<div class="a" style="left:1356px;top:557px;width:10px;height:1.6px;background:#2e3436"></div>
<div class="a" style="left:1360.2px;top:552.8px;width:1.6px;height:10px;background:#2e3436"></div>
<div class="a" style="left:1339px;top:589px;width:10px;height:1.6px;background:#2e3436"></div>
<div class="a" style="left:1356px;top:589px;width:10px;height:1.6px;background:#d0d0d0"></div>
<div class="a" style="left:1360.2px;top:584.8px;width:1.6px;height:10px;background:#d0d0d0"></div>
<svg style="left:996px;top:618px" width="17" height="17" viewBox="0 0 17 17"><path d="M1.5,12.5 V1.2 H13" fill="none" stroke="#000" stroke-width="1.1"/><path d="M16,3.4 L8.8,9.8" stroke="#000" stroke-width="2.6" stroke-linecap="round"/><path d="M7.6,10.6 L6.4,11.8" stroke="#000" stroke-width="2"/><path d="M2,16.2 C2.4,14.2 3.8,12.6 5.8,12.2 L6.8,13.4 C5.8,15.2 4,16.2 2,16.2 Z" fill="#1e90e8"/></svg>
<div class="t" style="left:1016.5px;top:620.44px;font-size:12px;color:#2e3436;letter-spacing:-0.12px">Fill and Stroke (Shift+Ctrl+F)</div>
<svg style="left:996px;top:652px" width="17" height="17" viewBox="0 0 17 17"><path d="M3,14 C5,10.5 8.5,6 15,2.3" fill="none" stroke="#000" stroke-width="1.7"/><path d="M4.8,11.2 C3.6,9.8 3.4,8.2 4.2,6.6 M7.6,7.8 C7,6.2 7.4,4.6 8.6,3.6 M5.8,11 C7.6,11 9.2,10.4 10.4,9.2 M9.2,7 C10.8,7 12.2,6.4 13.2,5.2" fill="none" stroke="#000" stroke-width="1.5"/><circle cx="3" cy="14.2" r="1.8" fill="#000"/><circle cx="15" cy="2.4" r="1.6" fill="#000"/></svg>
<div class="t" style="left:1016.5px;top:654.24px;font-size:12px;color:#2e3436;letter-spacing:-0.1px">Path Effects (Ctrl+&amp;)</div>
<svg style="left:996px;top:688px" width="18" height="16" viewBox="0 0 18 16"><path d="M3,1.5 H13 L11,4.5 H1 Z" fill="#1e9bf0"/><path d="M4.6,6.5 H15 L13,9.5 H2.6 Z" fill="#0b4a72"/><path d="M6.8,11.4 H17 L15,14.5 H4.8 Z" fill="#000"/></svg>
<div class="t" style="left:1016.5px;top:688.64px;font-size:12px;color:#2e3436;letter-spacing:-0.2px">Objects</div>
<svg style="left:1350px;top:622px" width="12" height="8" viewBox="0 0 12 8"><path d="M1,6.5 L5.5,2 L10,6.5" fill="none" stroke="#2e3436" stroke-width="1.6"/></svg>
<svg style="left:1350px;top:656px" width="12" height="8" viewBox="0 0 12 8"><path d="M1,6.5 L5.5,2 L10,6.5" fill="none" stroke="#2e3436" stroke-width="1.6"/></svg>
<svg style="left:1350px;top:690px" width="12" height="8" viewBox="0 0 12 8"><path d="M1,6.5 L5.5,2 L10,6.5" fill="none" stroke="#2e3436" stroke-width="1.6"/></svg>
<div class="a" style="left:1372px;top:127px;width:1px;height:484px;background:#dcd8d4"></div>
<div class="a" style="left:987px;top:713px;width:386px;height:1px;background:#dcd8d4"></div>
<div class="a" style="left:1378px;top:131px;width:27px;height:27px;background:#dad6d2;border-radius:5px"></div>
<div class="a" style="left:1378px;top:327px;width:27px;height:27px;background:#dad6d2;border-radius:5px"></div>
<div class="a" style="left:1378px;top:411px;width:27px;height:27px;background:#dad6d2;border-radius:5px"></div>
<div class="a" style="left:1378px;top:510px;width:27px;height:26px;background:#dad6d2;border-radius:5px"></div>
<div class="a" style="left:1378px;top:664px;width:27px;height:26px;background:#dad6d2;border-radius:5px"></div>
<div class="a" style="left:1378px;top:692px;width:27px;height:26px;background:#dad6d2;border-radius:5px"></div>
<div class="a" style="left:1378px;top:165px;width:27px;height:1px;background:#e0dcd8"></div>
<div class="a" style="left:1378px;top:319px;width:27px;height:1px;background:#e0dcd8"></div>
<div class="a" style="left:1378px;top:501px;width:27px;height:1px;background:#e0dcd8"></div>
<div class="a" style="left:1378px;top:627px;width:27px;height:1px;background:#e0dcd8"></div>
<svg style="left:1382px;top:136px" width="18" height="17" viewBox="0 0 18 17"><path d="M6.4,1.7 C17.6,1.7 17.6,14.5 6.4,14.5" fill="none" stroke="#000" stroke-width="2.9"/><circle cx="4.2" cy="1.7" r="1.7" fill="#00a000"/><circle cx="4.2" cy="14.6" r="1.7" fill="#00a000"/><path d="M5,5.6 C3.6,4.8 1.4,5.6 2.4,7.6 C3.4,9.2 4.6,9.4 3.2,11 C2.2,11.8 1,11.2 0.8,10.6" fill="none" stroke="#000" stroke-width="1.6"/></svg>
<svg style="left:1382px;top:178px" width="18" height="17" viewBox="0 0 18 17"><path d="M6.4,1.7 C17.6,1.7 17.6,14.5 6.4,14.5" fill="none" stroke="#000" stroke-width="2.9"/><circle cx="4.2" cy="1.7" r="1.7" fill="#00a000"/><circle cx="4.2" cy="14.6" r="1.7" fill="#00a000"/><path d="M5,5.6 C3.6,4.8 1.4,5.6 2.4,7.6 C3.4,9.2 4.6,9.4 3.2,11 C2.2,11.8 1,11.2 0.8,10.6" fill="none" stroke="#000" stroke-width="1.6"/></svg>
<svg style="left:1382px;top:332px" width="18" height="17" viewBox="0 0 18 17"><path d="M6.4,1.7 C17.6,1.7 17.6,14.5 6.4,14.5" fill="none" stroke="#000" stroke-width="2.9"/><circle cx="4.2" cy="1.7" r="1.7" fill="#00a000"/><circle cx="4.2" cy="14.6" r="1.7" fill="#00a000"/><path d="M5,5.6 C3.6,4.8 1.4,5.6 2.4,7.6 C3.4,9.2 4.6,9.4 3.2,11 C2.2,11.8 1,11.2 0.8,10.6" fill="none" stroke="#000" stroke-width="1.6"/></svg>
<svg style="left:1382px;top:515px" width="18" height="17" viewBox="0 0 18 17"><path d="M6.4,1.7 C17.6,1.7 17.6,14.5 6.4,14.5" fill="none" stroke="#000" stroke-width="2.9"/><circle cx="4.2" cy="1.7" r="1.7" fill="#00a000"/><circle cx="4.2" cy="14.6" r="1.7" fill="#00a000"/><path d="M5,5.6 C3.6,4.8 1.4,5.6 2.4,7.6 C3.4,9.2 4.6,9.4 3.2,11 C2.2,11.8 1,11.2 0.8,10.6" fill="none" stroke="#000" stroke-width="1.6"/></svg>
<svg style="left:1382px;top:205px" width="18" height="18" viewBox="0 0 18 18"><path d="M1,3 V1 H3" fill="none" stroke="#9a9a9a" stroke-width="1.4"/><path d="M6,1.2 H16" stroke="#7ccb7c" stroke-width="1.6"/><path d="M1.2,6 V16" stroke="#7ccb7c" stroke-width="1.6"/><path d="M12.2,3.8 L15.6,6.8 H8.8 Z" fill="#9a9a9a"/><path d="M8.6,8.4 V13.6 L5.4,11 Z" fill="#9a9a9a"/></svg>
<svg style="left:1382px;top:233px" width="18" height="18" viewBox="0 0 18 18"><path d="M14.4,1 V11" stroke="#9a9a9a" stroke-width="1.6" stroke-dasharray="2.4,1.4"/><path d="M1,14.6 H11" stroke="#9a9a9a" stroke-width="1.6" stroke-dasharray="2.4,1.4"/><path d="M12.6,5 V12.8 H4.8 Z" fill="#bbb"/><path d="M14.4,11.8 L16.8,14.4 L14.4,17 L12,14.4 Z" fill="#7ccb7c"/></svg>
<svg style="left:1382px;top:261px" width="18" height="18" viewBox="0 0 18 18"><path d="M4,1 V16" stroke="#9a9a9a" stroke-width="1.6"/><path d="M1,4 L4,0.8 L7,4 Z M1,13 L4,16.5 L7,13 Z" fill="#9a9a9a"/><path d="M4,8.6 H11" stroke="#9a9a9a" stroke-width="1.6"/><path d="M10.4,5.8 L13.6,8.6 L10.4,11.4 Z" fill="#9a9a9a"/><path d="M8,1.2 H10.5 M8,15.8 H10.5" stroke="#7ccb7c" stroke-width="1.5"/><path d="M13.5,1.2 H15.8 V3.5 M15.8,6.5 V10.5 M15.8,13.5 V15.8 H13.5" fill="none" stroke="#9a9a9a" stroke-width="1.5"/><path d="M15.8,6.8 V10.3" stroke="#7ccb7c" stroke-width="1.5"/></svg>
<svg style="left:1382px;top:290px" width="18" height="18" viewBox="0 0 18 18"><rect x="1" y="1" width="15" height="15" fill="none" stroke="#9a9a9a" stroke-width="1.6" stroke-dasharray="2.5,2.1"/><path d="M8.5,4.5 V12.5 M4.5,8.5 H12.5" stroke="#7ccb7c" stroke-width="1.8"/></svg>
<svg style="left:1382px;top:361px" width="18" height="17" viewBox="0 0 18 17"><rect x="6.8" y="0.6" width="3.6" height="3.6" fill="#000"/><path d="M2,2.4 H15" stroke="#000" stroke-width="1"/><circle cx="2" cy="2.4" r="1.1" fill="#000"/><circle cx="15" cy="2.4" r="1.1" fill="#000"/><path d="M2,14.6 C2,8.5 5,5.5 8.6,5.5 C12.2,5.5 15.2,8.5 15.2,14.6" fill="none" stroke="#00a000" stroke-width="1.5"/></svg>
<svg style="left:1382px;top:388px" width="18" height="17" viewBox="0 0 18 17"><path d="M1.8,14.6 L14.6,1.6 M1.8,5.4 L14.6,9.6" stroke="#000" stroke-width="1.2"/><circle cx="8.2" cy="7.6" r="2.1" fill="#00a000"/></svg>
<svg style="left:1382px;top:413px" width="18" height="22" viewBox="0 0 18 22"><path d="M1.5,2 C8,2.5 11,5 11.5,10 M14.5,9 C14,11 12,12.5 9.5,13.5" fill="none" stroke="#000" stroke-width="1.3"/><path d="M7.2,12.2 L9.6,14.6 L7.2,17 L4.8,14.6 Z" fill="#00a000"/></svg>
<svg style="left:1382px;top:448px" width="18" height="13" viewBox="0 0 18 13"><path d="M1.8,12 C1.8,6.5 4.5,3.5 8.5,3.5 C12.5,3.5 15.2,6.5 15.2,12" fill="none" stroke="#000" stroke-width="1.4"/><circle cx="8.5" cy="2" r="1.8" fill="#00a000"/></svg>
<svg style="left:1382px;top:472px" width="18" height="17" viewBox="0 0 18 17"><path d="M4,2 V14.5" stroke="#000" stroke-width="2"/><path d="M0.8,4.2 L4,0.5 L7.2,4.2 Z M0.8,12.6 L4,16.2 L7.2,12.6 Z" fill="#000"/><path d="M4,8.3 H8" stroke="#000" stroke-width="1.8"/><path d="M7.3,6 L10,8.3 L7.3,10.6 Z" fill="#000"/><path d="M13,0.5 V16.5" stroke="#000" stroke-width="1.3"/><circle cx="13" cy="8.3" r="2.4" fill="#00a000"/></svg>
<svg style="left:1382px;top:542px" width="18" height="16" viewBox="0 0 18 16"><rect x="2.5" y="1.6" width="4" height="4" fill="#000"/><rect x="10.5" y="1.6" width="4" height="4" fill="#000"/><rect x="2.5" y="9.6" width="4" height="4" fill="#000"/><rect x="10.5" y="9.6" width="4" height="4" fill="#000"/><path d="M8.5,0 V15 M1,7.6 H16" stroke="#00a000" stroke-width="1.1"/></svg>
<svg style="left:1382px;top:569px" width="18" height="17" viewBox="0 0 18 17"><path d="M5.5,5.5 C5.5,2 10.5,1.5 11.4,4.8" fill="none" stroke="#00a000" stroke-width="1.8"/><path d="M3.3,3.6 L5.5,7.5 L8.2,4.3 Z" fill="#00a000"/><path d="M8.5,6 V15.5 M4,10.8 H13" stroke="#000" stroke-width="1.1"/></svg>
<svg style="left:1382px;top:597px" width="18" height="17" viewBox="0 0 18 17"><path d="M5.8,1.5 H10.6 L15.8,13.2 H12.6 L11.5,10.6 H5 L3.9,13.2 H0.8 Z M5.9,8.2 H10.6 L8.25,3.2 Z" fill="#000"/><path d="M2,15.2 H16.5" stroke="#00a000" stroke-width="1.2"/><path d="M1.6,13 L3.8,15.2 L1.6,17.4 L-0.6,15.2 Z" fill="#00a000"/></svg>
<svg style="left:1382px;top:640px" width="18" height="16" viewBox="0 0 18 16"><rect x="3.6" y="1.6" width="11" height="13" fill="none" stroke="#000" stroke-width="1.4"/></svg>
<svg style="left:1383px;top:668px" width="16" height="16" viewBox="0 0 16 16"><rect x="0" y="0" width="16" height="16" fill="#000"/><rect x="1.6" y="1.6" width="1.8" height="1.8" fill="#fff"/><rect x="1.6" y="4.6" width="1.8" height="1.8" fill="#fff"/><rect x="1.6" y="7.6" width="1.8" height="1.8" fill="#fff"/><rect x="1.6" y="10.6" width="1.8" height="1.8" fill="#fff"/><rect x="1.6" y="13.6" width="1.8" height="1.8" fill="#fff"/><rect x="4.6" y="1.6" width="1.8" height="1.8" fill="#fff"/><rect x="4.6" y="4.6" width="1.8" height="1.8" fill="#fff"/><rect x="4.6" y="7.6" width="1.8" height="1.8" fill="#fff"/><rect x="4.6" y="10.6" width="1.8" height="1.8" fill="#fff"/><rect x="4.6" y="13.6" width="1.8" height="1.8" fill="#fff"/><rect x="7.6" y="1.6" width="1.8" height="1.8" fill="#fff"/><rect x="7.6" y="4.6" width="1.8" height="1.8" fill="#fff"/><rect x="7.6" y="7.6" width="1.8" height="1.8" fill="#fff"/><rect x="7.6" y="10.6" width="1.8" height="1.8" fill="#fff"/><rect x="7.6" y="13.6" width="1.8" height="1.8" fill="#fff"/><rect x="10.6" y="1.6" width="1.8" height="1.8" fill="#fff"/><rect x="10.6" y="4.6" width="1.8" height="1.8" fill="#fff"/><rect x="10.6" y="7.6" width="1.8" height="1.8" fill="#fff"/><rect x="10.6" y="10.6" width="1.8" height="1.8" fill="#fff"/><rect x="10.6" y="13.6" width="1.8" height="1.8" fill="#fff"/><rect x="13.6" y="1.6" width="1.8" height="1.8" fill="#fff"/><rect x="13.6" y="4.6" width="1.8" height="1.8" fill="#fff"/><rect x="13.6" y="7.6" width="1.8" height="1.8" fill="#fff"/><rect x="13.6" y="10.6" width="1.8" height="1.8" fill="#fff"/><rect x="13.6" y="13.6" width="1.8" height="1.8" fill="#fff"/></svg>
<svg style="left:1382px;top:696px" width="18" height="16" viewBox="0 0 18 16"><path d="M5.5,1 V14.7 M2,11.4 H16" stroke="#000" stroke-width="1.3"/></svg>
<svg style="left:968px;top:127px" width="19" height="18" viewBox="0 0 19 18"><rect x="0.5" y="0.5" width="17" height="17" rx="3" fill="#f6f5f4" stroke="#d8d4d0" stroke-width="1"/><circle cx="8.4" cy="8.2" r="7.5" fill="#000"/><path d="M13,13 L15.8,15.8" stroke="#000" stroke-width="2.6" stroke-linecap="round"/><path d="M4.6,4.8 H6.3 V11.9 H4.6 Z M4.6,4.8 L3.4,6.2 L4.6,6.6 Z M10.6,4.8 H12.3 V11.9 H10.6 Z M10.6,4.8 L9.4,6.2 L10.6,6.6 Z" fill="#fff"/><rect x="7.8" y="7" width="1.3" height="1.3" fill="#fff"/><rect x="7.8" y="10.6" width="1.3" height="1.3" fill="#fff"/></svg>
<svg style="left:968px;top:780px" width="19" height="18" viewBox="0 0 19 18"><rect x="0.5" y="0.5" width="17.5" height="16.5" rx="2.5" fill="#f8f7f6" stroke="#dcd8d4" stroke-width="1"/><circle cx="9.3" cy="5.6" r="3.1" fill="#fff" stroke="#555" stroke-width="0.8"/><circle cx="6.4" cy="11.4" r="3.1" fill="#9ad89a" stroke="#555" stroke-width="0.8"/><circle cx="12.2" cy="11.4" r="3.1" fill="#ffb0e8" stroke="#555" stroke-width="0.8"/></svg>
<svg style="left:238px;top:837px" width="18" height="18" viewBox="0 0 18 18"><path d="M1.6,12 C5.2,6.4 12.2,6.4 15.8,12 C12.2,17.6 5.2,17.6 1.6,12 Z" fill="#fff" stroke="#000" stroke-width="1.7"/><circle cx="8.7" cy="11.6" r="3.1" fill="#000"/><path d="M2.6,9.6 L1.2,8.2 M4.2,8.3 L3,6.5 M6.1,7.5 L5.4,5.4 M8.1,7.2 L7.9,4.8 M10.1,7.3 L10.5,5 M12.1,7.9 L13.1,5.9 M14,9 L15.4,7.4" stroke="#000" stroke-width="1.1"/></svg>
<svg style="left:275px;top:841px" width="16" height="16" viewBox="0 0 16 16"><rect x="0.5" y="7" width="10" height="8" fill="#000"/><path d="M8.6,7.2 V4 A2.9,2.9 0 0 1 14.4,4 V6.4" fill="none" stroke="#000" stroke-width="1.9"/></svg>
<svg style="left:1135px;top:98px" width="16" height="18" viewBox="0 0 16 18"><path d="M0.7,1.85 H12.1 V8.2" fill="none" stroke="#000" stroke-width="1.8"/><path d="M0.7,5.55 H7.95 V8.2" fill="none" stroke="#000" stroke-width="1.3"/><rect x="1" y="11.9" width="2" height="2" fill="#000"/><rect x="4.5" y="11.9" width="1.9" height="2" fill="#000"/><rect x="7.7" y="12" width="3.3" height="1.9" fill="#000"/><path d="M10.4,10.2 L13.2,12.95 L10.4,15.7 Z" fill="#000"/></svg>
<svg style="left:1163px;top:98px" width="16" height="18" viewBox="0 0 16 18"><path d="M0.7,1.85 H7 C10.4,1.85 12.1,4.2 12.1,8.2" fill="none" stroke="#000" stroke-width="1.8"/><path d="M0.7,5.55 H5 C6.6,5.55 7.95,6.6 7.95,8.2" fill="none" stroke="#000" stroke-width="1.3"/><rect x="1" y="11.9" width="2" height="2" fill="#000"/><rect x="4.5" y="11.9" width="1.9" height="2" fill="#000"/><rect x="7.7" y="12" width="3.3" height="1.9" fill="#000"/><path d="M10.4,10.2 L13.2,12.95 L10.4,15.7 Z" fill="#000"/></svg>
<svg style="left:1191px;top:98px" width="16" height="18" viewBox="0 0 16 18"><defs><linearGradient id="tg" x1="0" x2="1"><stop offset="0" stop-color="#1b8fe8"/><stop offset="0.6" stop-color="#06234a"/><stop offset="1" stop-color="#000"/></linearGradient></defs><path d="M0.7,1.6 H12.1 V8" fill="none" stroke="#000" stroke-width="1.2"/><rect x="0.6" y="2.7" width="10.4" height="3.9" fill="url(#tg)"/><path d="M0.7,7.6 H7.9 V9" fill="none" stroke="#000" stroke-width="1.2"/><rect x="1" y="11.9" width="2" height="2" fill="#000"/><rect x="4.5" y="11.9" width="1.9" height="2" fill="#000"/><rect x="7.7" y="12" width="3.3" height="1.9" fill="#000"/><path d="M10.4,10.2 L13.2,12.95 L10.4,15.7 Z" fill="#000"/></svg>
<svg style="left:1219px;top:98px" width="16" height="18" viewBox="0 0 16 18"><path d="M0.7,1.6 H12.1 V8" fill="none" stroke="#000" stroke-width="1.2"/><path d="M0.8,3 L2.6,4.6 L0.8,6.2 M3.6,3 L5.4,4.6 L3.6,6.2 M6.4,3 L8.2,4.6 L6.4,6.2" fill="none" stroke="#1b9ae8" stroke-width="1"/><path d="M2.2,3 L4,4.6 L2.2,6.2" fill="none" stroke="#000" stroke-width="0.6"/><path d="M0.7,7.6 H7.9 V9" fill="none" stroke="#000" stroke-width="1.2"/><rect x="1" y="11.9" width="2" height="2" fill="#000"/><rect x="4.5" y="11.9" width="1.9" height="2" fill="#000"/><rect x="7.7" y="12" width="3.3" height="1.9" fill="#000"/><path d="M10.4,10.2 L13.2,12.95 L10.4,15.7 Z" fill="#000"/></svg></body></html>
